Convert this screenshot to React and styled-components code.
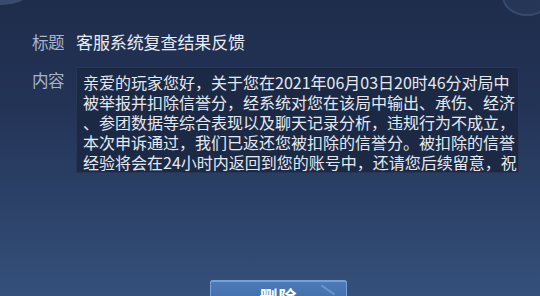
import React from "react";
import styled, { createGlobalStyle } from "styled-components";

const GlobalStyle = createGlobalStyle`
  html, body {
    margin: 0;
    padding: 0;
    background: #1f2d4b;
  }
  body {
    font-family: "Noto Sans CJK SC", "Noto Sans", sans-serif;
  }
`;

const Page = styled.div`
  position: relative;
  width: 540px;
  height: 296px;
  overflow: hidden;
  background: linear-gradient(180deg, #1f2d4c 0%, #233356 35%, #2b4066 65%, #34507b 100%);
  display: flex;
  flex-direction: column;
  padding: 30px 21px 0 32px;
  box-sizing: border-box;

  /* faint ornaments at the top corners */
  &::before {
    content: "";
    position: absolute;
    left: -30px;
    top: -14px;
    width: 56px;
    height: 19px;
    border-radius: 50%;
    background: rgba(120, 145, 190, 0.3);
  }
  &::after {
    content: "";
    position: absolute;
    right: -12px;
    top: -24px;
    width: 46px;
    height: 36px;
    border-radius: 50%;
    border: 2px solid rgba(120, 145, 190, 0.22);
    background: rgba(80, 105, 150, 0.15);
  }
`;

const Field = styled.div`
  display: grid;
  grid-template-columns: 44px 1fr;
  align-items: ${({ $top }) => ($top ? "start" : "center")};
  margin-top: ${({ $gap }) => $gap || 0}px;
`;

const Label = styled.div`
  font-size: 16.5px;
  line-height: 24px;
  color: #a8b4cb;
  letter-spacing: -0.5px;
  padding-top: ${({ $offset }) => $offset || 0}px;
`;

const Title = styled.div`
  font-size: 17px;
  line-height: 24px;
  color: #e8ecf3;
  letter-spacing: -0.1px;
`;

const Content = styled.div`
  height: 106px;
  box-sizing: border-box;
  overflow: hidden;
  background: #1c2945;
  border: 1px solid #26365a;
  padding: 4px 6px;
`;

const Line = styled.div`
  font-size: 16px;
  line-height: 20px;
  height: 20px;
  color: #e4e9f1;
  white-space: nowrap;
  letter-spacing: 0;
`;

const Actions = styled.div`
  display: flex;
  justify-content: center;
  margin-top: auto;
  padding-left: 6px;
  height: 16px;
`;

const Button = styled.button`
  position: relative;
  flex-shrink: 0;
  width: 137px;
  height: 32px;
  border: 1px solid #79a0d4;
  border-radius: 2px;
  background: linear-gradient(180deg, #4c7bb9 0%, #3d68a4 100%);
  color: #ffffff;
  font-family: "Noto Sans CJK SC", sans-serif;
  font-size: 18px;
  font-weight: 700;
  line-height: 30px;
  padding: 0;
  letter-spacing: 1px;
  box-shadow: inset 0 1px 0 rgba(170, 200, 240, 0.5);

  &::after {
    content: "";
    position: absolute;
    right: 10px;
    top: 8px;
    width: 16px;
    height: 2px;
    background: rgba(190, 215, 245, 0.3);
    transform: rotate(35deg);
  }
`;

const lines = [
  "亲爱的玩家您好，关于您在2021年06月03日20时46分对局中",
  "被举报并扣除信誉分，经系统对您在该局中输出、承伤、经济",
  "、参团数据等综合表现以及聊天记录分析，违规行为不成立，",
  "本次申诉通过，我们已返还您被扣除的信誉分。被扣除的信誉",
  "经验将会在24小时内返回到您的账号中，还请您后续留意，祝",
];

const App = () => {
  return (
    <>
      <GlobalStyle />
      <Page>
        <Field>
          <Label>标题</Label>
          <Title>客服系统复查结果反馈</Title>
        </Field>
        <Field $top $gap={13}>
          <Label $offset={1}>内容</Label>
          <Content>
            {lines.map((text, i) => (
              <Line key={i}>{text}</Line>
            ))}
          </Content>
        </Field>
        <Actions>
          <Button>删除</Button>
        </Actions>
      </Page>
    </>
  );
};

export default App;
